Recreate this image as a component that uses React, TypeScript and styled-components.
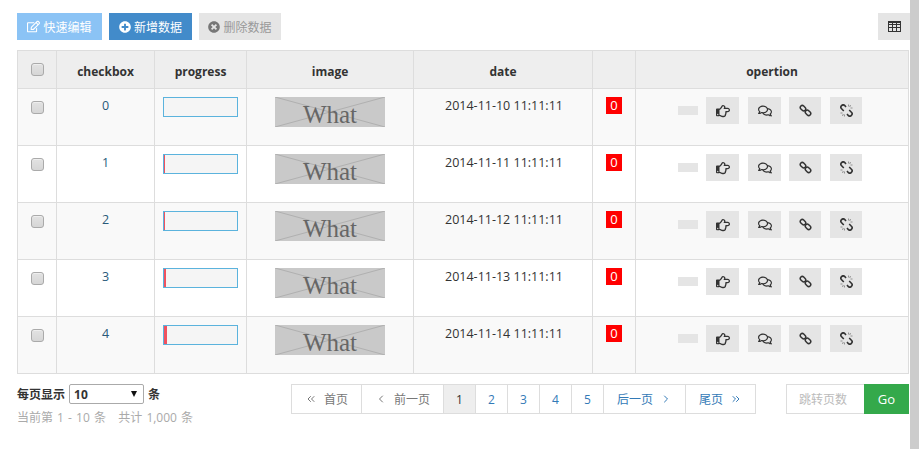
import React from 'react';
import styled, { createGlobalStyle } from 'styled-components';
import { ChevronLeft, ChevronRight, ChevronsLeft, ChevronsRight } from 'lucide-react';
import {
  FaPlusCircle,
  FaRegComments,
  FaRegEdit,
  FaRegHandPointRight,
  FaTimesCircle,
} from 'react-icons/fa';

const FONT = '"Open Sans", "Noto Sans CJK SC", sans-serif';

const rows = [
  { id: 0, date: '2014-11-10 11:11:11', progress: 0 },
  { id: 1, date: '2014-11-11 11:11:11', progress: 1 },
  { id: 2, date: '2014-11-12 11:11:11', progress: 2 },
  { id: 3, date: '2014-11-13 11:11:11', progress: 3 },
  { id: 4, date: '2014-11-14 11:11:11', progress: 4 },
];

const GlobalStyle = createGlobalStyle`
  html, body {
    margin: 0;
    padding: 0;
    background: #fff;
    overflow: hidden;
  }
  * {
    box-sizing: border-box;
  }
`;

const Page = styled.div`
  display: flex;
  width: 919px;
  height: 449px;
  overflow: hidden;
  font-family: ${FONT};
  font-size: 12px;
  color: #333;
`;

const Content = styled.main`
  width: 910px;
  padding: 13px 1px 0 17px;
`;

const Scrollbar = styled.div`
  width: 9px;
  background: #ccc;
`;

const Toolbar = styled.div`
  display: flex;
  gap: 7px;
  height: 27px;
  margin-bottom: 10px;
`;

const ToolButton = styled.button<{ $kind: 'light' | 'primary' | 'muted'; $width: number }>`
  display: flex;
  align-items: center;
  justify-content: center;
  gap: 3px;
  width: ${(p) => p.$width}px;
  height: 27px;
  padding: 0;
  border: 0;
  font-family: ${FONT};
  font-size: 12px;
  background: ${(p) =>
    p.$kind === 'light' ? '#8bc3f5' : p.$kind === 'primary' ? '#428bca' : '#e5e5e5'};
  color: ${(p) => (p.$kind === 'muted' ? '#999' : '#fff')};

  svg {
    color: ${(p) => (p.$kind === 'muted' ? '#777' : '#fff')};
  }
`;

const ColumnsButton = styled.button`
  display: flex;
  align-items: center;
  justify-content: center;
  width: 32px;
  height: 27px;
  margin-left: auto;
  margin-right: -1px;
  padding: 0;
  border: 0;
  background: #e5e5e5;
  color: #333;
`;

const Table = styled.table`
  width: 892px;
  table-layout: fixed;
  border-collapse: collapse;
  border: 1px solid #ddd;
`;

const HeadCell = styled.th`
  height: 38px;
  padding: 4px 0 0;
  border: 1px solid #ddd;
  background: #eee;
  font-size: 12px;
  font-weight: 700;
  color: #333;
  text-align: center;
`;

const Row = styled.tr<{ $odd: boolean }>`
  height: 57px;
  background: ${(p) => (p.$odd ? '#fff' : '#f9f9f9')};
`;

const Cell = styled.td`
  padding: 8px;
  border: 1px solid #ddd;
  font-size: 12.5px;
  line-height: 18px;
  vertical-align: top;
  text-align: center;
`;

const DateCell = styled(Cell)`
  padding-left: 10px;
`;

const IdText = styled.span`
  color: #295a7a;
`;

const Check = styled.input.attrs({ type: 'checkbox' })`
  display: block;
  width: 13px;
  height: 13px;
  margin: 4px auto 0;
  appearance: none;
  border: 1px solid #aaa;
  border-radius: 3px;
  background: linear-gradient(#e2e2e2, #d6d6d6);
  box-shadow: inset 0 1px 0 #eee;
`;

const HeadCheck = styled(Check)`
  margin-top: -4px;
`;

const ProgressTrack = styled.div`
  width: 75px;
  height: 20px;
  border: 1px solid #5bb3dd;
  background: #f5f5f5;
`;

const ProgressFill = styled.div`
  height: 100%;
  background: #f0525f;
`;

const Placeholder = styled.div`
  position: relative;
  width: 110px;
  height: 30px;
  margin: 0 auto;
  overflow: hidden;
  background: #c9c9c9;
`;

const PlaceholderCross = styled.svg`
  position: absolute;
  inset: 0;
  width: 100%;
  height: 100%;
`;

const PlaceholderAlt = styled.span`
  position: relative;
  display: block;
  color: #666;
  font-family: "Liberation Serif", serif;
  font-size: 25px;
  line-height: 36px;
  text-align: center;
`;

const Badge = styled.span`
  display: block;
  width: 16px;
  height: 17px;
  margin: 0 auto;
  background: #f00;
  color: #fff;
  font-size: 13px;
  line-height: 17px;
`;

const Actions = styled.div`
  display: flex;
  align-items: flex-start;
  gap: 8px;
  padding-left: 34px;
`;

const BlankAction = styled.span`
  width: 20px;
  height: 9px;
  margin-top: 9px;
  background: #e5e5e5;
`;

const ActionButton = styled.button<{ $width: number; $extra?: boolean }>`
  display: flex;
  align-items: center;
  justify-content: center;
  width: ${(p) => p.$width}px;
  height: 27px;
  margin-right: ${(p) => (p.$extra ? 1 : 0)}px;
  padding: 0;
  border: 0;
  background: #e5e5e5;
  color: #333;
`;

const Footer = styled.div`
  display: flex;
  align-items: flex-start;
  padding-top: 10px;
`;

const PageInfo = styled.div`
  flex: 1;
`;

const PageSizeRow = styled.div`
  display: flex;
  align-items: center;
  gap: 4px;
  height: 20px;
  font-weight: 600;
  color: #333;
`;

const PageSizeBox = styled.div`
  position: relative;
  width: 75px;
  height: 20px;

  &::after {
    content: '';
    position: absolute;
    top: 7px;
    right: 7px;
    border-top: 6px solid #111;
    border-left: 3px solid transparent;
    border-right: 3px solid transparent;
    pointer-events: none;
  }
`;

const PageSize = styled.select`
  width: 100%;
  height: 100%;
  padding: 0 0 0 4px;
  appearance: none;
  border: 1px solid #aaa;
  border-radius: 2px;
  background: #fff;
  font-family: ${FONT};
  font-size: 12px;
  font-weight: 700;
  color: #333;
`;

const Summary = styled.div`
  margin-top: 5px;
  line-height: 18px;
  color: #aaa;
  white-space: pre;
  word-spacing: 1px;
`;

const Pager = styled.nav`
  display: flex;
  height: 30px;
  border: 1px solid #ddd;
`;

const PageLink = styled.a<{ $width: number; $tone: 'blue' | 'grey' | 'active' }>`
  display: flex;
  align-items: center;
  justify-content: center;
  gap: 7px;
  width: ${(p) => p.$width}px;
  border-left: 1px solid #ddd;
  background: ${(p) => (p.$tone === 'active' ? '#eee' : '#fff')};
  color: ${(p) => (p.$tone === 'blue' ? '#337ab7' : p.$tone === 'grey' ? '#777' : '#333')};
  font-size: 12px;

  &:first-child {
    border-left: 0;
  }
`;

const Jump = styled.div`
  display: flex;
  height: 30px;
  margin-left: 30px;
`;

const JumpInput = styled.input`
  width: 78px;
  padding: 0 0 0 12px;
  border: 1px solid #ddd;
  border-right: 0;
  font-family: ${FONT};
  font-size: 12px;

  &::placeholder {
    color: #bbb;
    opacity: 1;
  }
`;

const GoButton = styled.button`
  width: 45px;
  padding: 0;
  border: 0;
  background: #34a94b;
  color: #fff;
  font-family: ${FONT};
  font-size: 13px;
`;

const columnWidths = [39, 98, 92, 167, 179, 43, 273];

const GridIcon = () => (
  <svg width="13" height="11" viewBox="0 0 13 11" fill="none" stroke="#333" strokeWidth="1">
    <rect x="0.5" y="0.5" width="12" height="10" />
    <path d="M0 1.5H13M0 3.5H13M0 6.5H13M4.5 0V11M8.5 0V11" />
  </svg>
);

const LinkIcon = () => (
  <svg width="13" height="13" viewBox="0 0 13 13" fill="none" stroke="#333" strokeWidth="1.5">
    <rect x="1" y="2.2" width="6" height="4" rx="2" transform="rotate(45 4 4.2)" />
    <rect x="6" y="6.8" width="6" height="4" rx="2" transform="rotate(45 9 8.8)" />
  </svg>
);

const UnlinkIcon = () => (
  <svg width="13" height="13" viewBox="0 0 13 13" fill="none">
    <path
      d="M6 3L4.8 1.6a2.2 2.2 0 0 0-3.2 3.2L3.8 7M7 10l1.2 1.4a2.2 2.2 0 0 0 3.2-3.2L9.2 6"
      stroke="#333"
      strokeWidth="1.6"
    />
    <path
      d="M8.5 0.5V2.5M10.5 1L9.7 3M12.5 4H10.5M4.5 12.5V10.5M2.5 12L3.3 10M0.5 9H2.5"
      stroke="#888"
      strokeWidth="0.9"
    />
  </svg>
);

const App = () => (
  <Page>
    <GlobalStyle />
    <Content>
      <Toolbar>
        <ToolButton $kind="light" $width={85}>
          <FaRegEdit size={13} />
          快速编辑
        </ToolButton>
        <ToolButton $kind="primary" $width={83}>
          <FaPlusCircle size={12} />
          新增数据
        </ToolButton>
        <ToolButton $kind="muted" $width={82}>
          <FaTimesCircle size={12} />
          删除数据
        </ToolButton>
        <ColumnsButton>
          <GridIcon />
        </ColumnsButton>
      </Toolbar>
      <Table>
        <colgroup>
          {columnWidths.map((width, index) => (
            <col key={index} width={width} />
          ))}
        </colgroup>
        <thead>
          <tr>
            <HeadCell>
              <HeadCheck />
            </HeadCell>
            <HeadCell>checkbox</HeadCell>
            <HeadCell>progress</HeadCell>
            <HeadCell>image</HeadCell>
            <HeadCell>date</HeadCell>
            <HeadCell />
            <HeadCell>opertion</HeadCell>
          </tr>
        </thead>
        <tbody>
          {rows.map((row) => (
            <Row key={row.id} $odd={row.id % 2 === 1}>
              <Cell>
                <Check />
              </Cell>
              <Cell>
                <IdText>{row.id}</IdText>
              </Cell>
              <Cell>
                <ProgressTrack>
                  <ProgressFill style={{ width: `${row.progress}%` }} />
                </ProgressTrack>
              </Cell>
              <Cell>
                <Placeholder>
                  <PlaceholderCross viewBox="0 0 110 30" preserveAspectRatio="none">
                    <path d="M0 0L110 30M110 0L0 30" stroke="#b0b0b0" strokeWidth="1" fill="none" />
                  </PlaceholderCross>
                  <PlaceholderAlt>What</PlaceholderAlt>
                </Placeholder>
              </Cell>
              <DateCell>{row.date}</DateCell>
              <Cell>
                <Badge>0</Badge>
              </Cell>
              <Cell>
                <Actions>
                  <BlankAction />
                  <ActionButton $width={33} $extra>
                    <FaRegHandPointRight size={14} />
                  </ActionButton>
                  <ActionButton $width={33}>
                    <FaRegComments size={14} />
                  </ActionButton>
                  <ActionButton $width={32} $extra>
                    <LinkIcon />
                  </ActionButton>
                  <ActionButton $width={32}>
                    <UnlinkIcon />
                  </ActionButton>
                </Actions>
              </Cell>
            </Row>
          ))}
        </tbody>
      </Table>
      <Footer>
        <PageInfo>
          <PageSizeRow>
            每页显示
            <PageSizeBox>
              <PageSize defaultValue="10">
                <option value="10">10</option>
              </PageSize>
            </PageSizeBox>
            条
          </PageSizeRow>
          <Summary>当前第 1 - 10 条   共计 1,000 条</Summary>
        </PageInfo>
        <Pager>
          <PageLink $width={69} $tone="grey">
            <ChevronsLeft size={12} strokeWidth={2} />
            首页
          </PageLink>
          <PageLink $width={82} $tone="grey">
            <ChevronLeft size={12} strokeWidth={2} />
            前一页
          </PageLink>
          <PageLink $width={32} $tone="active">1</PageLink>
          <PageLink $width={32} $tone="blue">2</PageLink>
          <PageLink $width={32} $tone="blue">3</PageLink>
          <PageLink $width={32} $tone="blue">4</PageLink>
          <PageLink $width={32} $tone="blue">5</PageLink>
          <PageLink $width={82} $tone="blue">
            后一页
            <ChevronRight size={12} strokeWidth={2} />
          </PageLink>
          <PageLink $width={70} $tone="blue">
            尾页
            <ChevronsRight size={12} strokeWidth={2} />
          </PageLink>
        </Pager>
        <Jump>
          <JumpInput placeholder="跳转页数" />
          <GoButton>Go</GoButton>
        </Jump>
      </Footer>
    </Content>
    <Scrollbar />
  </Page>
);

export default App;
